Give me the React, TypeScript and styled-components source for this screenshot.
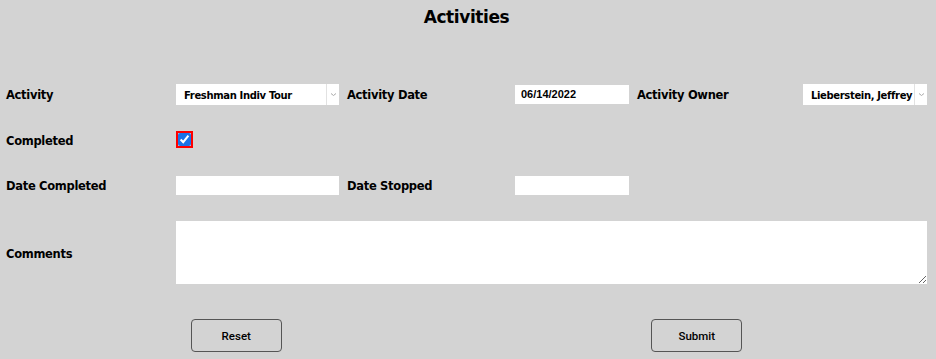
import React from "react"
import styled, { createGlobalStyle } from "styled-components"

const GlobalStyle = createGlobalStyle`
  html, body {
    margin: 0;
    padding: 0;
    background: #d3d3d3;
  }
  body {
    font-family: "DejaVu Sans", "Liberation Sans", sans-serif;
    color: #000;
  }
`

const Page = styled.main`
  width: 936px;
  height: 359px;
  padding: 0 9px 0 6px;
  box-sizing: border-box;
  background: #d3d3d3;
`

const Title = styled.h1`
  margin: 0;
  padding-top: 7px;
  height: 83px;
  box-sizing: border-box;
  text-align: center;
  font-size: 17px;
  font-weight: bold;
  letter-spacing: -0.4px;
`

const FormGrid = styled.div`
  display: grid;
  grid-template-columns: 170px 163px 176px 114px 174px 124px;
  grid-template-rows: 22px 18px 20px 63px;
  row-gap: 26px;
  align-items: center;
`

const Label = styled.label<{ $inset?: boolean }>`
  padding-left: ${(p) => (p.$inset ? "8px" : "0")};
  padding-top: 2px;
  font-size: 11.5px;
  font-weight: bold;
  letter-spacing: -0.3px;
  white-space: nowrap;
`

const TextBox = styled.input`
  width: 100%;
  height: 19px;
  box-sizing: border-box;
  border: none;
  outline: none;
  background: #fff;
  padding: 0 6px;
  font-family: "Liberation Sans", Arial, sans-serif;
  font-size: 11px;
  font-weight: bold;
  color: #000;
`

const SelectBox = styled.div`
  display: flex;
  height: 21px;
  background: #fff;
`

const SelectValue = styled.div`
  flex: 1;
  display: flex;
  align-items: center;
  padding: 2px 0 0 8px;
  font-size: 10px;
  font-weight: bold;
  letter-spacing: -0.35px;
  white-space: nowrap;
  overflow: hidden;
`

const SelectArrow = styled.div`
  width: 12px;
  display: flex;
  align-items: center;
  justify-content: center;
  border-left: 1px solid #e2e2e2;
`

const CheckBox = styled.input`
  margin: 0 0 0 2px;
  width: 13px;
  height: 13px;
  outline: 2px solid #ff0000;
  outline-offset: 0;
  accent-color: #1a73e8;
`

const CommentBox = styled.textarea`
  grid-column: 2 / 7;
  height: 63px;
  box-sizing: border-box;
  border: none;
  outline: none;
  background: #fff;
  resize: both;
`

const ButtonBar = styled.div`
  display: flex;
  justify-content: space-around;
  margin-top: 35px;
`

const Button = styled.button`
  width: 91px;
  height: 33px;
  border: 1px solid #555;
  border-radius: 4px;
  background: #d3d3d3;
  font-family: Roboto, "Liberation Sans", sans-serif;
  font-size: 11.5px;
  font-weight: 500;
  color: #000;
`

const Chevron = () => (
  <svg width="7" height="5" viewBox="0 0 7 5">
    <path d="M1 1.5 L3.5 3.5 L6 1.5" fill="none" stroke="#aaa" strokeWidth="1" />
  </svg>
)

const Select = ({ value }: { value: string }) => (
  <SelectBox>
    <SelectValue>{value}</SelectValue>
    <SelectArrow>
      <Chevron />
    </SelectArrow>
  </SelectBox>
)

export default function App() {
  return (
    <>
      <GlobalStyle />
      <Page>
        <Title>Activities</Title>
        <FormGrid>
          <Label>Activity</Label>
          <Select value="Freshman Indiv Tour" />
          <Label $inset>Activity Date</Label>
          <TextBox defaultValue="06/14/2022" />
          <Label $inset>Activity Owner</Label>
          <Select value="Lieberstein, Jeffrey" />

          <Label>Completed</Label>
          <div>
            <CheckBox type="checkbox" defaultChecked />
          </div>
          <div />
          <div />
          <div />
          <div />

          <Label>Date Completed</Label>
          <TextBox />
          <Label $inset>Date Stopped</Label>
          <TextBox />
          <div />
          <div />

          <Label>Comments</Label>
          <CommentBox />
        </FormGrid>
        <ButtonBar>
          <Button>Reset</Button>
          <Button>Submit</Button>
        </ButtonBar>
      </Page>
    </>
  )
}
